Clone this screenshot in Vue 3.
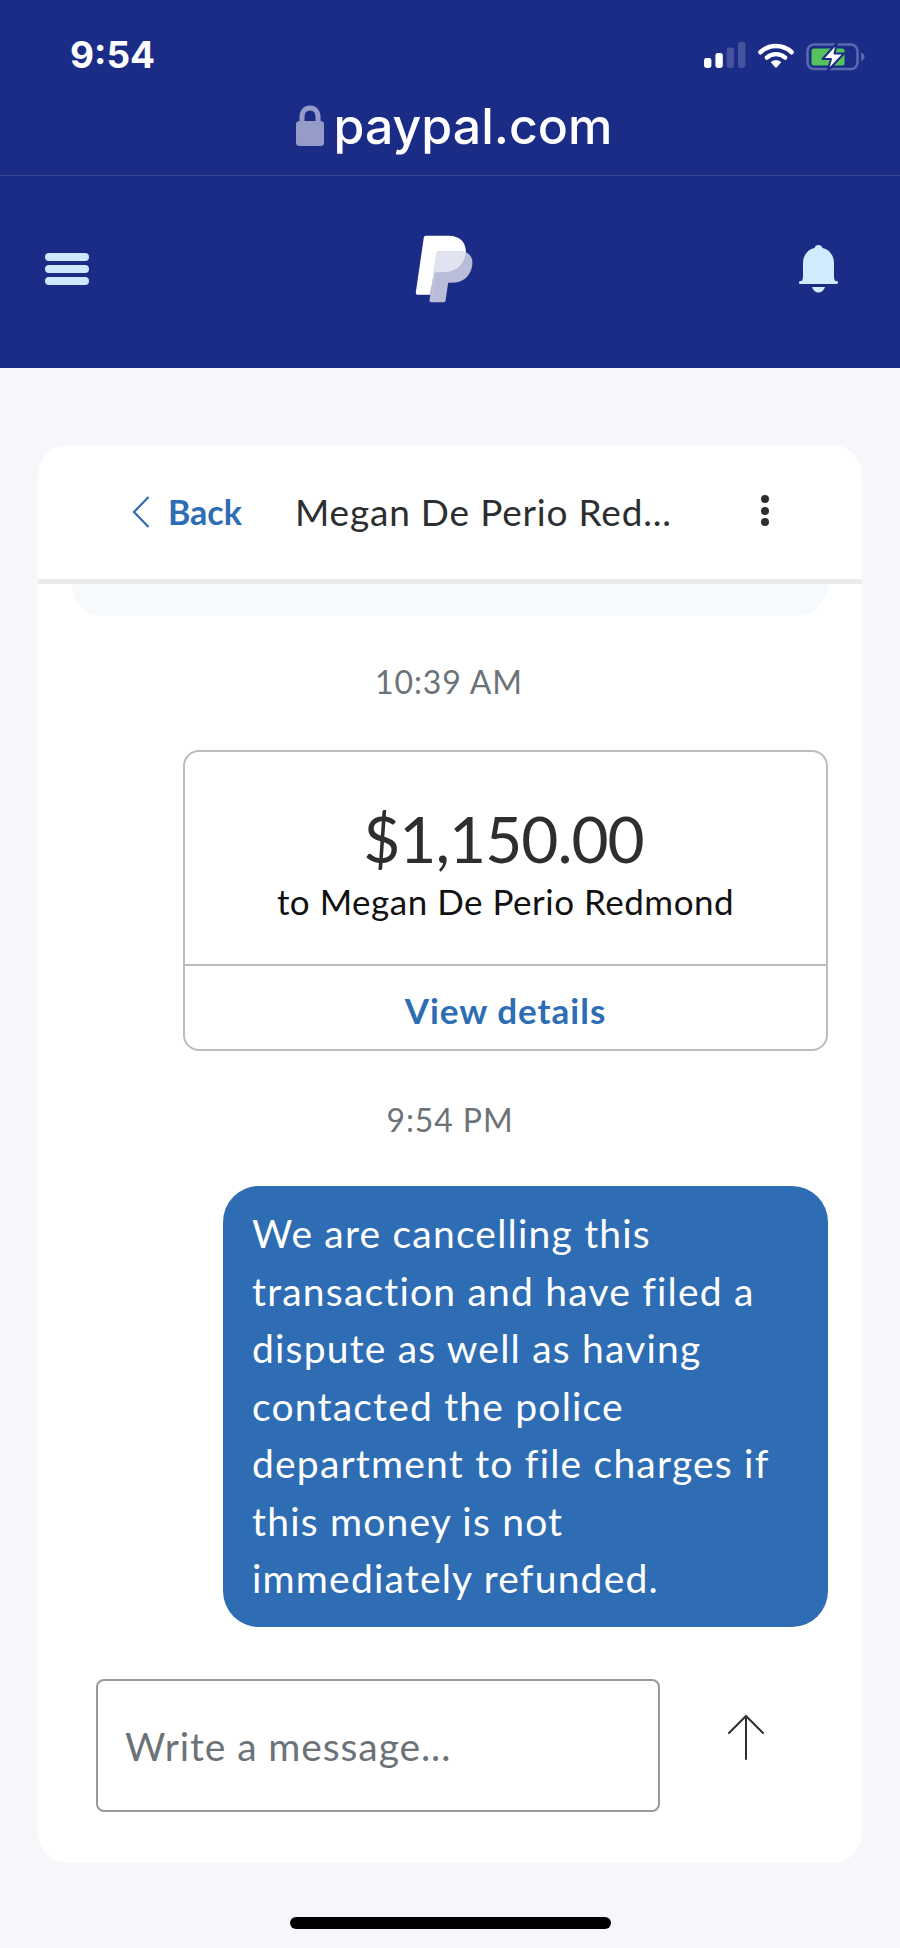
<template>
  <div class="phone">
    <header class="top">
      <div class="status">
        <span class="clock">9:54</span>
        <div class="status_icons">
          <svg class="signal" width="42" height="26" viewBox="0 0 42 26">
            <rect x="0" y="16" width="7.4" height="10" rx="2.4" fill="#fff" />
            <rect x="11.4" y="11" width="7.4" height="15" rx="2.4" fill="#fff" />
            <rect x="22.7" y="5.5" width="7.4" height="20.5" rx="2.4" fill="#45539f" />
            <rect x="34" y="0" width="7.4" height="26" rx="2.4" fill="#45539f" />
          </svg>
          <svg class="wifi" width="36" height="26" viewBox="0 0 36 26">
            <path d="M2.5 10.2C11 2 25 2 33.5 10.2" fill="none" stroke="#fff" stroke-width="4.6" stroke-linecap="round" />
            <path d="M8.8 15.6C14 11 22 11 27.2 15.6" fill="none" stroke="#fff" stroke-width="4.4" stroke-linecap="round" />
            <path d="M13.2 20.2C16 18.1 20 18.1 22.8 20.2L18 25.6Z" fill="#fff" stroke="#fff" stroke-linejoin="round" />
          </svg>
          <svg class="battery" width="60" height="30" viewBox="0 0 60 30">
            <rect x="1.5" y="2.5" width="50" height="24.500" rx="6.500" fill="none" stroke="#5a68b0" stroke-width="2.600" />
            <path d="M55 10.500C57.500 11.500 58.500 13 58.500 14.800S57.500 18 55 19Z" fill="#5a68b0" />
            <rect x="5.500" y="6.500" width="33" height="17" rx="2.500" fill="#55c35c" />
            <path d="M31 1L16.500 17H25L21.500 29L38 11.500H28.500Z" fill="#fff" stroke="#1b2c87" stroke-width="2" stroke-linejoin="round" />
          </svg>
        </div>
      </div>
      <div class="url">
        <svg class="lock" width="28" height="41" viewBox="0 0 28 41">
          <path d="M6 18V12C6 6.5 9.2 3 14 3S22 6.500 22 12V18" fill="none" stroke="#959cca" stroke-width="5" />
          <rect x="0" y="16" width="28" height="25" rx="3.5" fill="#959cca" />
        </svg>
        <span>paypal.com</span>
      </div>
      <nav class="nav">
        <div class="burger"><i></i><i></i><i></i></div>
        <svg class="logo" width="62" height="70" viewBox="65 40 185 210">
          <defs>
            <clipPath id="frontP">
              <path d="M103 45H172C208 45 228 70 222 102C215 135 190 155 150 155H132L122 222H78Q72 222 73 215L97 50Q98 45 103 45Z" />
            </clipPath>
          </defs>
          <path d="M103 45H172C208 45 228 70 222 102C215 135 190 155 150 155H132L122 222H78Q72 222 73 215L97 50Q98 45 103 45Z" fill="#fff" />
          <path d="M142 92H205C232 92 246 108 242 135C236 168 214 186 180 186H170L162 240Q161 245 155 245H119Q113 245 114 239L135 98Q136 92 142 92Z" fill="#b9bdd9" />
          <path d="M142 92H205C232 92 246 108 242 135C236 168 214 186 180 186H170L162 240Q161 245 155 245H119Q113 245 114 239L135 98Q136 92 142 92Z" fill="#e2e3f0" clip-path="url(#frontP)" />
          <path d="M130 155H150V222H114Z" fill="#b9bdd9" clip-path="url(#frontP)" />
        </svg>
        <svg class="bell" width="39" height="48" viewBox="0 0 39 48">
          <path d="M19.500 0C21.500 0 23 1.300 23.500 3C30.500 4.500 35 10.500 35 18V31C35 33.500 35.300 35 36.500 36H38Q39 36 39 37.500T38 39H1Q0 39 0 37.500T1 36H2.500C3.700 35 4 33.500 4 31V18C4 10.500 8.500 4.500 15.500 3C16 1.300 17.500 0 19.500 0Z" fill="#d2eafd" />
          <path d="M13 42H26C25 45.500 22.500 47.500 19.500 47.500S14 45.500 13 42Z" fill="#d2eafd" />
        </svg>
      </nav>
    </header>

    <main class="card">
      <div class="card_head">
        <div class="back">
          <svg width="18" height="32" viewBox="0 0 18 32">
            <path d="M16.500 1L2 16L16.500 31" fill="none" stroke="#2c6db3" stroke-width="2.200" />
          </svg>
          <span>Back</span>
        </div>
        <div class="name">{{ contact }}</div>
        <div class="more"><i></i><i></i><i></i></div>
      </div>

      <div class="thread">
        <div class="faded"></div>
        <div class="stamp first">10:39 AM</div>
        <div class="payment">
          <div class="payment_body">
            <div class="amount">$1,150.00</div>
            <div class="payee">to Megan De Perio Redmond</div>
          </div>
          <div class="payment_link">View details</div>
        </div>
        <div class="stamp second">9:54 PM</div>
        <div class="bubble">
          <div v-for="line in lines" :key="line">{{ line }}</div>
        </div>
      </div>

      <div class="composer">
        <div class="field">Write a message...</div>
        <svg class="send" width="36" height="46" viewBox="0 0 36 46">
          <path d="M18 45V2M1 19L18 2L35 19" fill="none" stroke="#2c2e2f" stroke-width="2" stroke-linecap="round" />
        </svg>
      </div>
    </main>

    <div class="home_bar"></div>
  </div>
</template>

<script setup>
const contact = 'Megan De Perio Red...'
const lines = [
  'We are cancelling this',
  'transaction and have filed a',
  'dispute as well as having',
  'contacted the police',
  'department to file charges if',
  'this money is not',
  'immediately refunded.'
]
</script>

<style>
html, body {
  margin: 0;
  background: #f5f7fa;
}
</style>

<style scoped>
* {
  box-sizing: border-box;
}

.phone {
  width: 900px;
  height: 1948px;
  overflow: hidden;
  display: flex;
  flex-direction: column;
  background: #f5f7fa;
  font-family: Lato, "Noto Sans", sans-serif;
  color: #2c2e2f;
}

.top {
  height: 368px;
  background: #1b2c87;
  display: flex;
  flex-direction: column;
  color: #fff;
}

.status {
  height: 92px;
  padding: 38px 34px 0 70px;
  display: flex;
  justify-content: space-between;
  align-items: flex-start;
}

.clock {
  font-family: Inter, sans-serif;
  font-weight: 700;
  font-size: 37px;
  line-height: 34px;
}

.status_icons {
  display: flex;
  align-items: flex-start;
  gap: 12px;
  padding-top: 4px;
}

.url {
  height: 84px;
  border-bottom: 1px solid #37458f;
  display: flex;
  justify-content: center;
  gap: 10px;
  padding: 13px 0 0 8px;
}

.url span {
  margin-top: -2px;
  font-family: Inter, sans-serif;
  font-weight: 500;
  font-size: 50px;
  line-height: 46px;
}

.nav {
  flex: 1;
  display: flex;
  justify-content: space-between;
  align-items: center;
  padding: 0 62px 6px 45px;
}

.burger {
  width: 44px;
  display: flex;
  flex-direction: column;
  gap: 4px;
}

.burger i {
  height: 8px;
  border-radius: 4px;
  background: #cfe8ff;
}

.card {
  margin: 77px 38px 0;
  height: 1418px;
  border-radius: 30px;
  background: #fff;
  display: flex;
  flex-direction: column;
}

.card_head {
  height: 139px;
  border-bottom: 5px solid #ebebeb;
  display: flex;
  align-items: flex-start;
  padding: 50px 0 0 94px;
}

.back {
  display: flex;
  align-items: center;
  gap: 18px;
  width: 163px;
  color: #2c6db3;
  font-weight: 700;
  font-size: 34px;
  line-height: 34px;
}

.name {
  width: 466px;
  font-size: 37px;
  line-height: 34px;
  letter-spacing: 0.8px;
}

.more {
  display: flex;
  flex-direction: column;
  gap: 3.500px;
}

.more i {
  width: 8px;
  height: 8px;
  border-radius: 50%;
  background: #2c2e2f;
}

.thread {
  flex: 1;
  padding: 0 34px;
  display: flex;
  flex-direction: column;
  align-items: flex-end;
}

.faded {
  align-self: stretch;
  height: 32px;
  background: #f7fafd;
  border-radius: 0 0 32px 32px;
}

.stamp {
  align-self: center;
  height: 40px;
  font-size: 32px;
  line-height: 40px;
  letter-spacing: 0.9px;
  color: #6c7378;
}

.stamp.first {
  margin-top: 46px;
  margin-right: 2px;
}

.stamp.second {
  margin-top: 49px;
}

.payment {
  margin-top: 48px;
  width: 645px;
  height: 301px;
  flex: none;
  border: 2px solid #bbbdbf;
  border-radius: 16px;
}

.payment_body {
  height: 214px;
  border-bottom: 2px solid #bbbdbf;
  text-align: center;
  padding-top: 51px;
}

.amount {
  margin-right: 4px;
  font-size: 64px;
  line-height: 72px;
  letter-spacing: -1px;
}

.payee {
  margin-top: 4px;
  font-size: 35px;
  line-height: 44px;
  color: #111;
  letter-spacing: 0.5px;
}

.payment_link {
  padding-top: 5px;
  text-align: center;
  color: #2c6db3;
  font-weight: 700;
  font-size: 35px;
  line-height: 78px;
  letter-spacing: 1px;
}

.bubble {
  margin-top: 46px;
  width: 605px;
  height: 441px;
  padding: 19px 0 0 29px;
  border-radius: 36px;
  background: #2e6db4;
  color: #fff;
  font-size: 39px;
  line-height: 57.500px;
  letter-spacing: 1.200px;
}

.composer {
  height: 236px;
  padding: 52px 0 0 58px;
  display: flex;
  align-items: flex-start;
}

.field {
  width: 564px;
  height: 133px;
  border: 2px solid #9a9a9a;
  border-radius: 8px;
  padding-left: 27px;
  font-size: 39px;
  line-height: 130px;
  letter-spacing: 0.9px;
  color: #6c7378;
}

.send {
  margin: 35px 0 0 68px;
}

.home_bar {
  width: 321px;
  height: 12px;
  margin: 54px auto 0;
  border-radius: 6px;
  background: #000;
}
</style>
